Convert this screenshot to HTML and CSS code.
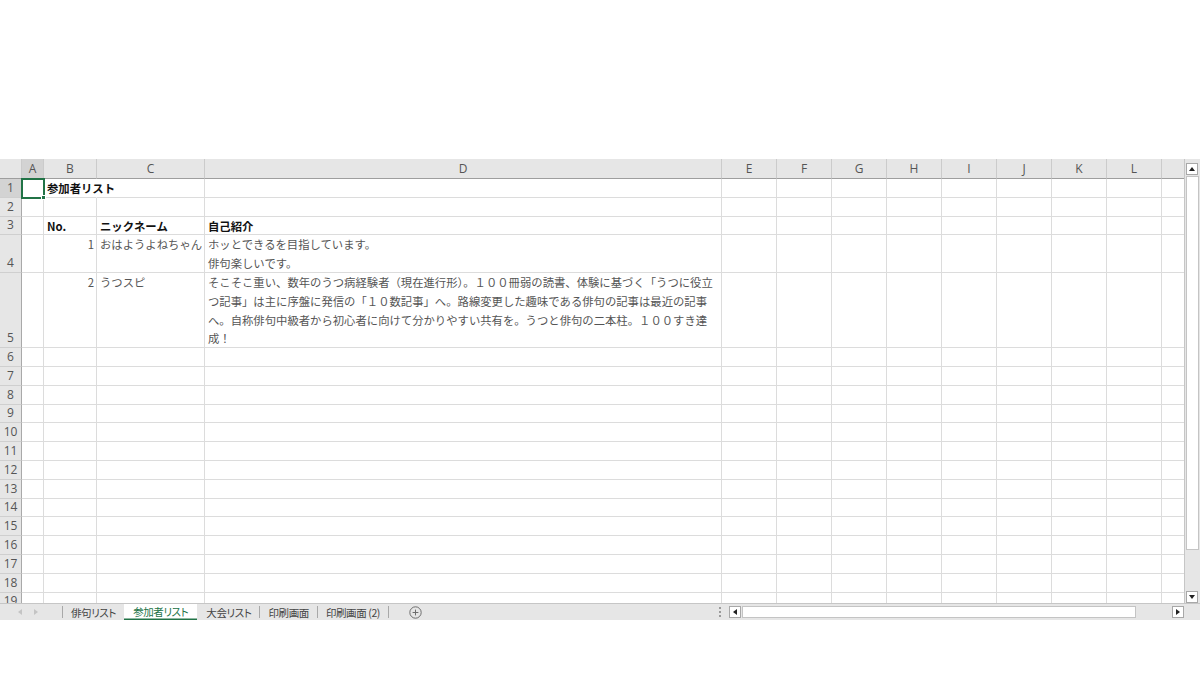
FILE: index.html
```html
<!DOCTYPE html>
<html lang="ja">
<head>
  <meta charset="UTF-8">
  <title>参加者リスト - Excel</title>
  <link rel="stylesheet" href="styles.css">
</head>
<body>
  <div class="book">
    <div class="pane">
      <div class="grid">
        <div class="row hdr">
          <div class="corner"></div><div class="on">A</div><div>B</div><div>C</div><div>D</div><div>E</div><div>F</div><div>G</div><div>H</div><div>I</div><div>J</div><div>K</div><div>L</div><div></div>
        </div>
        <div class="row">
          <div class="rh on">1</div><div class="sel"></div><div class="txt bold spill">参加者リスト</div><div></div><div></div><div></div><div></div><div></div><div></div><div></div><div></div><div></div><div></div><div></div>
        </div>
        <div class="row">
          <div class="rh">2</div><div></div><div></div><div></div><div></div><div></div><div></div><div></div><div></div><div></div><div></div><div></div><div></div><div></div>
        </div>
        <div class="row">
          <div class="rh">3</div><div></div><div class="txt bold">No.</div><div class="txt bold">ニックネーム</div><div class="txt bold">自己紹介</div><div></div><div></div><div></div><div></div><div></div><div></div><div></div><div></div><div></div>
        </div>
        <div class="row r2">
          <div class="rh">4</div><div></div><div class="txt num">1</div><div class="txt">おはようよねちゃん</div><div class="txt">ホッとできるを目指しています。<br>俳句楽しいです。</div><div></div><div></div><div></div><div></div><div></div><div></div><div></div><div></div><div></div>
        </div>
        <div class="row r4">
          <div class="rh">5</div><div></div><div class="txt num">2</div><div class="txt">うつスピ</div><div class="txt">そこそこ重い、数年のうつ病経験者（現在進行形）。１００冊弱の読書、体験に基づく「うつに役立<br>つ記事」は主に序盤に発信の「１０数記事」へ。路線変更した趣味である俳句の記事は最近の記事<br>へ。自称俳句中級者から初心者に向けて分かりやすい共有を。うつと俳句の二本柱。１００すき達<br>成！</div><div></div><div></div><div></div><div></div><div></div><div></div><div></div><div></div><div></div>
        </div>
        <div class="row"><div class="rh">6</div><div></div><div></div><div></div><div></div><div></div><div></div><div></div><div></div><div></div><div></div><div></div><div></div><div></div></div>
        <div class="row"><div class="rh">7</div><div></div><div></div><div></div><div></div><div></div><div></div><div></div><div></div><div></div><div></div><div></div><div></div><div></div></div>
        <div class="row"><div class="rh">8</div><div></div><div></div><div></div><div></div><div></div><div></div><div></div><div></div><div></div><div></div><div></div><div></div><div></div></div>
        <div class="row"><div class="rh">9</div><div></div><div></div><div></div><div></div><div></div><div></div><div></div><div></div><div></div><div></div><div></div><div></div><div></div></div>
        <div class="row"><div class="rh">10</div><div></div><div></div><div></div><div></div><div></div><div></div><div></div><div></div><div></div><div></div><div></div><div></div><div></div></div>
        <div class="row"><div class="rh">11</div><div></div><div></div><div></div><div></div><div></div><div></div><div></div><div></div><div></div><div></div><div></div><div></div><div></div></div>
        <div class="row"><div class="rh">12</div><div></div><div></div><div></div><div></div><div></div><div></div><div></div><div></div><div></div><div></div><div></div><div></div><div></div></div>
        <div class="row"><div class="rh">13</div><div></div><div></div><div></div><div></div><div></div><div></div><div></div><div></div><div></div><div></div><div></div><div></div><div></div></div>
        <div class="row"><div class="rh">14</div><div></div><div></div><div></div><div></div><div></div><div></div><div></div><div></div><div></div><div></div><div></div><div></div><div></div></div>
        <div class="row"><div class="rh">15</div><div></div><div></div><div></div><div></div><div></div><div></div><div></div><div></div><div></div><div></div><div></div><div></div><div></div></div>
        <div class="row"><div class="rh">16</div><div></div><div></div><div></div><div></div><div></div><div></div><div></div><div></div><div></div><div></div><div></div><div></div><div></div></div>
        <div class="row"><div class="rh">17</div><div></div><div></div><div></div><div></div><div></div><div></div><div></div><div></div><div></div><div></div><div></div><div></div><div></div></div>
        <div class="row"><div class="rh">18</div><div></div><div></div><div></div><div></div><div></div><div></div><div></div><div></div><div></div><div></div><div></div><div></div><div></div></div>
        <div class="row"><div class="rh">19</div><div></div><div></div><div></div><div></div><div></div><div></div><div></div><div></div><div></div><div></div><div></div><div></div><div></div></div>
      </div>
      <div class="vscroll">
        <div class="sbtn"><svg width="6" height="4" viewBox="0 0 6 4"><path d="M0 4L3 0L6 4Z" fill="#222"/></svg></div>
        <div class="thumb"></div>
        <div class="sbtn"><svg width="6" height="4" viewBox="0 0 6 4"><path d="M0 0L6 0L3 4Z" fill="#222"/></svg></div>
      </div>
    </div>
    <div class="tabbar">
      <div class="nav">
        <svg width="4" height="6" viewBox="0 0 4 6"><path d="M4 0L0 3L4 6Z" fill="#c4c4c4"/></svg>
        <svg width="4" height="6" viewBox="0 0 4 6"><path d="M0 0L4 3L0 6Z" fill="#c4c4c4"/></svg>
      </div>
      <div class="sheets">
        <div class="tab">俳句リスト</div>
        <div class="tab active">参加者リスト</div>
        <div class="tab">大会リスト</div>
        <div class="tab">印刷画面</div>
        <div class="tab">印刷画面 (2)</div>
        <div class="add">
          <svg width="13" height="13" viewBox="0 0 13 13"><circle cx="6.5" cy="6.5" r="5.7" fill="none" stroke="#6e6e6e" stroke-width="1"/><path d="M6.5 3.6V9.4M3.6 6.5H9.4" stroke="#6e6e6e" stroke-width="1"/></svg>
        </div>
      </div>
      <div class="split"><i></i><i></i><i></i></div>
      <div class="hscroll">
        <div class="sbtn"><svg width="4" height="6" viewBox="0 0 4 6"><path d="M4 0L0 3L4 6Z" fill="#222"/></svg></div>
        <div class="hthumb"></div>
        <div class="htrack"></div>
        <div class="sbtn"><svg width="4" height="6" viewBox="0 0 4 6"><path d="M0 0L4 3L0 6Z" fill="#222"/></svg></div>
      </div>
    </div>
  </div>
</body>
</html>
```

FILE: styles.css
```css
body {
  margin: 0;
  background: #fff;
  font-family: "Noto Sans CJK JP", sans-serif;
}
.book {
  margin-top: 159px;
}
.pane {
  display: flex;
  height: 444px;
  background: #e6e6e6;
}
.grid {
  width: 1184px;
  flex: none;
  overflow: hidden;
  background: #fff;
  border-right: 1px solid #c6c6c6;
}

/* rows and cells */
.row {
  display: flex;
  height: 18.8px;
}
.row.r2 { height: 37.6px; }
.row.r4 { height: 75.2px; }
.row > div {
  flex: none;
  box-sizing: border-box;
  height: 100%;
  border-right: 1px solid #dcdcdc;
  border-bottom: 1px solid #dcdcdc;
  white-space: nowrap;
  position: relative;
}
.row > :nth-child(1) { width: 22px; }
.row > :nth-child(2) { width: 22px; }
.row > :nth-child(3) { width: 53px; }
.row > :nth-child(4) { width: 108px; }
.row > :nth-child(5) { width: 517px; }
.row > :nth-child(n+6) { width: 55px; }
.row > :nth-child(14) { width: 22px; border-right: none; }

.txt {
  padding: 0 3px;
  font-size: 11.35px;
  line-height: 18.8px;
  color: #555;
}
.txt.bold {
  font-weight: bold;
  color: #111;
}
.txt.num {
  text-align: right;
  padding-right: 2px;
}
.row > .spill {
  border-right-color: transparent;
  z-index: 1;
}

/* column header */
.row.hdr {
  height: 20px;
}
.row.hdr > div {
  background: #e6e6e6;
  border-right-color: #cbcbcb;
  border-bottom-color: #9e9e9e;
  font-family: "Open Sans", sans-serif;
  font-size: 12px;
  line-height: 19px;
  text-align: center;
  color: #555;
}
.row.hdr > .on {
  background: #d3d3d3;
  border-bottom-color: #6f8f7a;
}
.corner {
  background-image: linear-gradient(135deg, transparent 50%, #c3c3c3 50%);
  background-size: 11px 11px;
  background-position: right 3px bottom 3px;
  background-repeat: no-repeat;
}

/* row header */
.row > .rh {
  background: #e6e6e6;
  border-right-color: #a9a9a9;
  border-bottom-color: #cfcfcf;
  font-family: "Open Sans", sans-serif;
  font-size: 12px;
  line-height: 18px;
  color: #555;
  display: flex;
  align-items: flex-end;
  justify-content: center;
}
.row > .rh.on {
  background: #d3d3d3;
  border-right-color: #6f8f7a;
}

/* active cell */
.sel {
  outline: 2px solid #217346;
  outline-offset: -1px;
  z-index: 2;
}
.sel::after {
  content: "";
  position: absolute;
  right: -3px;
  bottom: -3px;
  width: 3px;
  height: 3px;
  background: #217346;
  border: 1px solid #fff;
}

/* scroll bars */
.vscroll {
  flex: 1;
  display: flex;
  flex-direction: column;
  padding: 4px 1px 0 1px;
}
.sbtn {
  flex: none;
  box-sizing: border-box;
  width: 12px;
  height: 12px;
  background: #fff;
  border: 1px solid #a8a8a8;
  display: flex;
  align-items: center;
  justify-content: center;
}
.thumb {
  flex: none;
  box-sizing: border-box;
  height: 374px;
  margin: 1px 0 auto;
  background: #fff;
  border: 1px solid #c4c4c4;
}

/* sheet tabs */
.tabbar {
  display: flex;
  height: 16px;
  background: #e6e6e6;
  border-top: 1px solid #c6c6c6;
  font-size: 10.5px;
  color: #444;
}
.nav {
  width: 63px;
  flex: none;
  box-sizing: border-box;
  display: flex;
  align-items: center;
  gap: 12px;
  padding-left: 18px;
  border-right: 1px solid #a8a8a8;
  margin: 2px 0;
}
.sheets {
  width: 647px;
  flex: none;
  display: flex;
  align-items: stretch;
}
.tab {
  padding: 0 8px;
  line-height: 13px;
  letter-spacing: -0.4px;
  font-feature-settings: "palt";
  border-right: 1px solid #a8a8a8;
  margin: 2px 0;
  white-space: nowrap;
}
.tab.active {
  margin: 0 0 0 -1px;
  padding: 0 9px;
  line-height: 16px;
  background: #fff;
  color: #217346;
  border-right: none;
  box-shadow: inset 0 -1.5px 0 #217346;
}
.tab.active + .tab {
  padding-left: 9px;
}
.add {
  display: flex;
  align-items: center;
  padding-left: 20px;
}
.split {
  width: 19px;
  flex: none;
  display: flex;
  flex-direction: column;
  align-items: center;
  justify-content: center;
  gap: 2px;
}
.split i {
  width: 2px;
  height: 2px;
  background: #9a9a9a;
}
.hscroll {
  width: 455px;
  flex: none;
  display: flex;
  padding-top: 2px;
  height: 12px;
}
.hthumb {
  width: 394px;
  flex: none;
  box-sizing: border-box;
  margin-left: 1px;
  background: #fff;
  border: 1px solid #c4c4c4;
}
.htrack {
  flex: 1;
}
```
